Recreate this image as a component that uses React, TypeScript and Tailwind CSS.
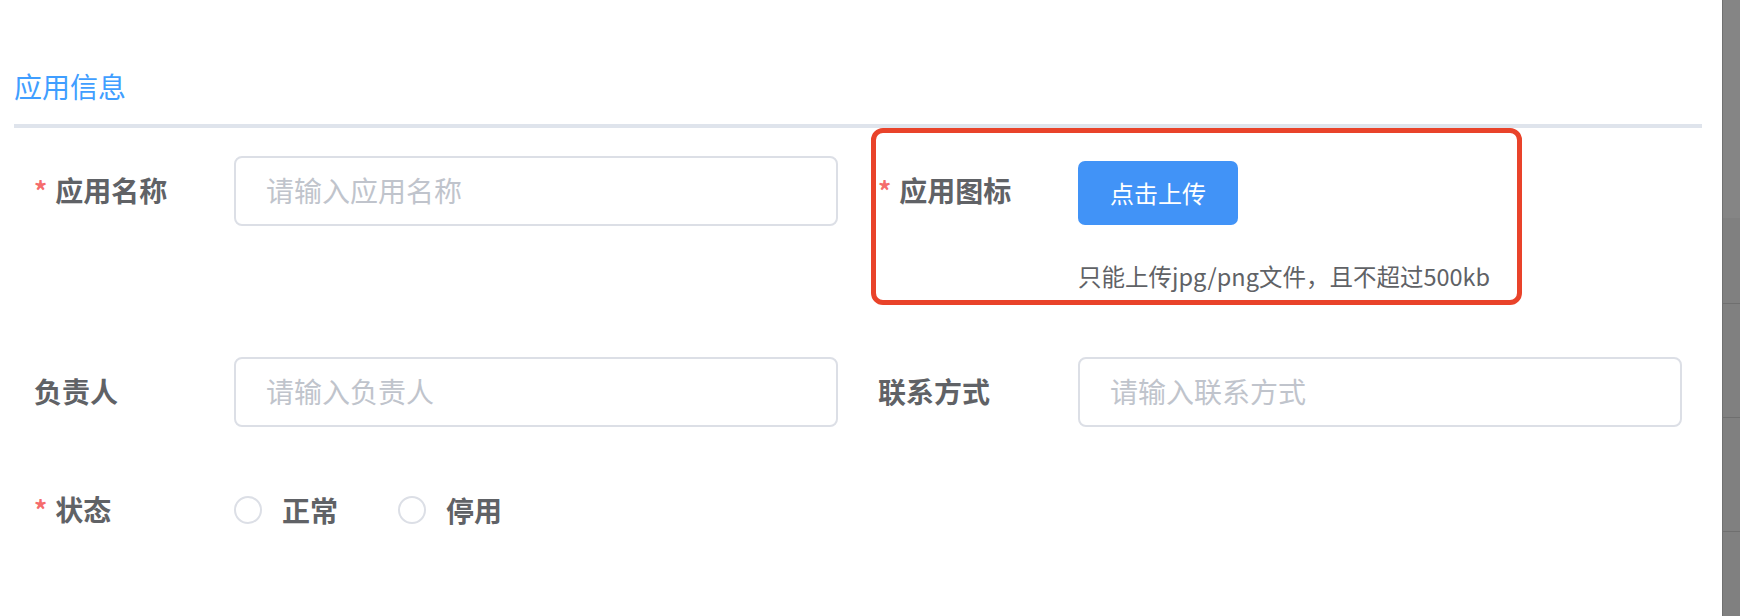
import { useState } from "react";

const font = "font-['Noto_Sans_CJK_SC','Noto_Sans',sans-serif]";

function Label({ text, required }: { text: string; required?: boolean }) {
  return (
    <div className="w-[200px] shrink-0 text-[28px] leading-[68px] font-semibold text-[#606266] whitespace-nowrap">
      {required && <span className="text-[#f56c6c] text-[26px] mr-[8px] relative -top-[1px]">*</span>}
      {text}
    </div>
  );
}

function TextInput({ placeholder }: { placeholder: string }) {
  return (
    <input
      className="flex-1 min-w-0 h-[70px] rounded-[8px] border-2 border-[#dcdfe6] bg-white pl-[30px] pr-[20px] pb-[2px] text-[28px] text-[#606266] outline-none placeholder:text-[#c0c4cc]"
      placeholder={placeholder}
    />
  );
}

function Radio({ label, checked, onClick }: { label: string; checked: boolean; onClick: () => void }) {
  return (
    <label className="flex items-center cursor-pointer" onClick={onClick}>
      <span
        className={
          checked
            ? "w-[28px] h-[28px] rounded-full border-2 border-[#409eff] bg-[#409eff] flex items-center justify-center"
            : "w-[28px] h-[28px] rounded-full border-2 border-[#dcdfe6] bg-white"
        }
      >
        {checked && <span className="w-[8px] h-[8px] rounded-full bg-white" />}
      </span>
      <span className="ml-[20px] text-[28px] leading-[68px] font-semibold text-[#606266]">{label}</span>
    </label>
  );
}

export default function App() {
  const [status, setStatus] = useState<string | null>(null);

  return (
    <div className={`w-full h-[616px] flex bg-white overflow-hidden ${font}`}>
      <div className="flex-1 min-w-0 pl-[14px] pr-[20px] pt-[66px]">
        <div className="text-[28px] leading-[40px] text-[#409eff]">应用信息</div>
        <div className="mt-[18px] h-[4px] bg-[#dfe4ec]" />

        <div className="mt-[28px] px-[20px]">
          {/* row 1 */}
          <div className="h-[201px] grid grid-cols-2 gap-x-[40px] items-start">
            <div className="flex">
              <Label text="应用名称" required />
              <TextInput placeholder="请输入应用名称" />
            </div>
            <div className="relative flex">
              <div className="absolute -left-[7px] -top-[28px] w-[651px] h-[177px] border-[5px] border-[#e9432a] rounded-[12px] pointer-events-none" />
              <Label text="应用图标" required />
              <div className="flex flex-col">
                <button className="mt-[5px] w-[160px] h-[64px] rounded-[7px] bg-[#4193f7] text-white text-[24px]">
                  点击上传
                </button>
                <div className="mt-[34px] text-[23.5px] leading-[34px] text-[#606266] whitespace-nowrap">
                  只能上传jpg/png文件，且不超过500kb
                </div>
              </div>
            </div>
          </div>

          {/* row 2 */}
          <div className="h-[118px] grid grid-cols-2 gap-x-[40px] items-start">
            <div className="flex">
              <Label text="负责人" />
              <TextInput placeholder="请输入负责人" />
            </div>
            <div className="flex">
              <Label text="联系方式" />
              <TextInput placeholder="请输入联系方式" />
            </div>
          </div>

          {/* row 3 */}
          <div className="flex">
            <Label text="状态" required />
            <div className="flex items-center gap-[60px]">
              <Radio label="正常" checked={status === "on"} onClick={() => setStatus("on")} />
              <Radio label="停用" checked={status === "off"} onClick={() => setStatus("off")} />
            </div>
          </div>
        </div>
      </div>

      <div className="w-[18px] shrink-0 flex flex-col bg-[#808080] border-l border-[#707070]">
        <div className="h-[218px] bg-[#858585]" />
        <div className="h-[86px] border-b border-[#6f6f6f]" />
        <div className="h-[114px] border-b border-[#6f6f6f]" />
        <div className="h-[114px] border-b border-[#6f6f6f]" />
      </div>
    </div>
  );
}
